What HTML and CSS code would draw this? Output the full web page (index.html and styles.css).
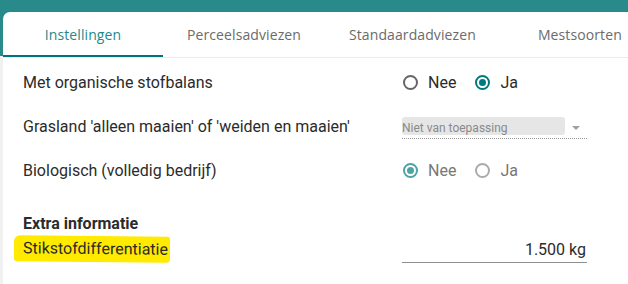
FILE: index.html
```html
<!DOCTYPE html>
<html lang="nl">
<head>
<meta charset="utf-8">
<title>Instellingen</title>
<link rel="stylesheet" href="styles.css">
</head>
<body>
<div class="page">
  <div class="card">
    <nav class="tabs">
      <div class="tab active">Instellingen</div>
      <div class="tab">Perceelsadviezen</div>
      <div class="tab">Standaardadviezen</div>
      <div class="tab">Mestsoorten</div>
    </nav>
    <div class="content">
      <div class="row">
        <div class="label">Met organische stofbalans</div>
        <div class="control radios">
          <span class="radio"><span class="circle"></span>Nee</span>
          <span class="radio checked"><span class="circle"></span>Ja</span>
        </div>
      </div>
      <div class="row">
        <div class="label">Grasland 'alleen maaien' of 'weiden en maaien'</div>
        <div class="control">
          <div class="select">
            <span class="select-box">Niet van toepassing</span>
            <span class="caret"></span>
          </div>
        </div>
      </div>
      <div class="row">
        <div class="label">Biologisch (volledig bedrijf)</div>
        <div class="control radios disabled">
          <span class="radio checked"><span class="circle"></span>Nee</span>
          <span class="radio"><span class="circle"></span>Ja</span>
        </div>
      </div>
      <div class="section">
        <div class="section-title">Extra informatie</div>
        <div class="row input-row">
          <div class="label"><span class="marker">Stikstofdifferentiatie</span></div>
          <div class="control">
            <div class="input">1.500 kg</div>
          </div>
        </div>
      </div>
    </div>
  </div>
</div>
</body>
</html>
```

FILE: styles.css
```css
html, body {
  margin: 0;
  padding: 0;
}
body {
  font-family: Roboto, "Liberation Sans", sans-serif;
  color: #2b2b2b;
  overflow: hidden;
}
.page {
  height: 284px;
  box-sizing: border-box;
  padding: 12px 0 0 3px;
  background: linear-gradient(#288a8a 0, #288a8a 56px, #f1f1f1 56px);
}
.card {
  background: #fff;
  height: 100%;
  border-top-left-radius: 7px;
}
.tabs {
  display: flex;
  height: 45px;
  border-bottom: 1px solid #ececec;
  white-space: nowrap;
  overflow: hidden;
}
.tab {
  min-width: 160px;
  padding: 0 24px;
  box-sizing: border-box;
  display: flex;
  align-items: center;
  justify-content: center;
  font-family: "Open Sans", sans-serif;
  font-size: 14px;
  color: #6b6b6b;
  flex-shrink: 0;
  letter-spacing: 0.1px;
}
.tab.active {
  color: #1f8a8a;
  box-shadow: inset 0 -2px 0 #00747a;
}
.content {
  padding-left: 20px;
  padding-top: 2px;
}
.row {
  display: flex;
  align-items: center;
  height: 44px;
}
.label {
  width: 379px;
  font-size: 16px;
  flex-shrink: 0;
}
.control {
  width: 185px;
}
.radios {
  display: flex;
  align-items: center;
  gap: 18px;
  font-size: 16px;
}
.radio {
  display: inline-flex;
  align-items: center;
  gap: 10px;
}
.circle {
  width: 11px;
  height: 11px;
  border: 2px solid #666;
  border-radius: 50%;
  display: inline-block;
  position: relative;
  margin-left: 1px;
}
.radio.checked .circle {
  border-color: #00797c;
}
.radio.checked .circle::after {
  content: "";
  position: absolute;
  left: 2px;
  top: 2px;
  width: 7px;
  height: 7px;
  border-radius: 50%;
  background: #00797c;
}
.radios.disabled {
  color: #777;
}
.radios.disabled .circle {
  border-color: #aaa;
}
.radios.disabled .radio.checked .circle {
  border-color: #4fa3a3;
}
.radios.disabled .radio.checked .circle::after {
  background: #4fa3a3;
}
.select {
  display: flex;
  align-items: center;
  border-bottom: 1px dotted #999;
  height: 21px;
  margin-top: 4px;
}
.select-box {
  width: 163px;
  height: 18px;
  background: #e6e6e6;
  border-radius: 3px;
  font-size: 12px;
  color: #8a8a8a;
  display: flex;
  align-items: flex-end;
  line-height: 14px;
  box-sizing: border-box;
  align-self: flex-start;
}
.caret {
  margin-left: 7px;
  width: 0;
  height: 0;
  border-left: 4px solid transparent;
  border-right: 4px solid transparent;
  border-top: 4px solid #a0a0a0;
}
.section {
  padding-top: 21px;
}
.section-title {
  font-size: 16px;
  font-weight: bold;
  height: 22px;
  line-height: 22px;
}
.input-row {
  height: 28px;
  align-items: flex-end;
}
.input-row .label {
  align-self: center;
}
.marker {
  display: inline-block;
  margin-left: -9px;
  padding: 3px 2px 4px 9px;
  background: #ffea00;
  border-radius: 6px 2px 4px 3px;
  transform: skewY(0.6deg);
}
.input {
  border-bottom: 1px solid #8f8f8f;
  text-align: right;
  font-size: 16px;
  padding: 0 1px 3px 0;
}
```
